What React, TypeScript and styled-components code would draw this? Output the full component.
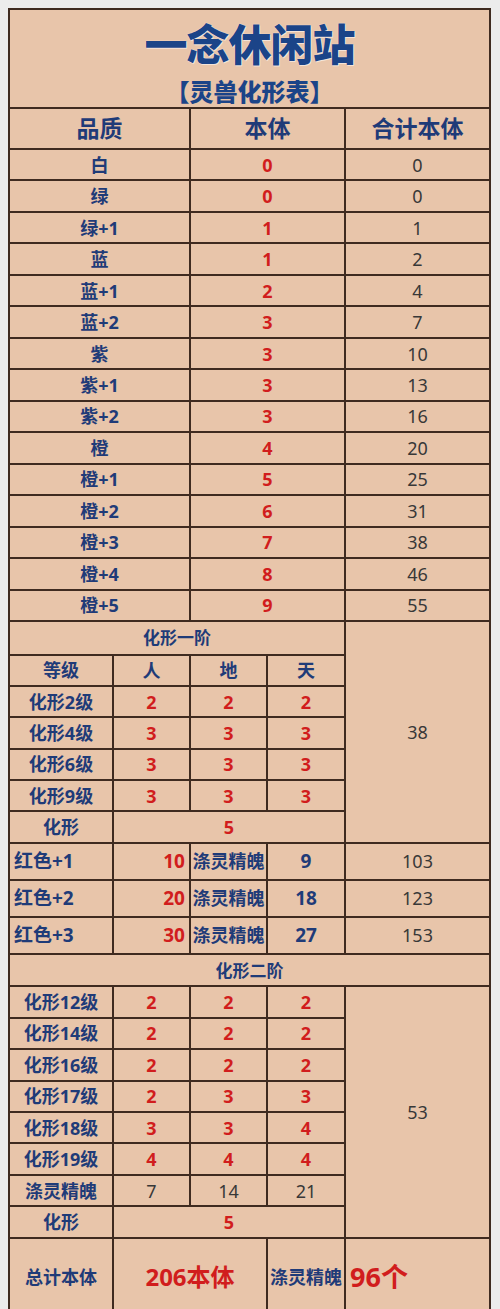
import React from "react";
import styled, { createGlobalStyle, css } from "styled-components";

const Global = createGlobalStyle`
  html, body { margin: 0; padding: 0; background: #ececec; }
  body { padding: 8px; font-family: "Noto Sans", "Noto Sans CJK SC", sans-serif; }
`;

const NAVY = "#1f3b78";
const RED = "#d11d1d";
const PLAIN = "#383838";
const LINE = "#3f2b20";
const FILL = "#e8c5aa";

const Sheet = styled.div`
  display: grid;
  width: 483px;
  box-sizing: border-box;
  grid-template-columns: 102px 75px 75px 76px 143px;
  grid-template-rows:
    97px 39px repeat(15, 29.47px) 31.5px repeat(6, 29.4px) repeat(3, 35px)
    30.4px repeat(8, 29.45px) 76px;
  gap: 2px;
  padding: 2px;
  background: ${LINE};
`;

type Tone = "navy" | "red" | "plain";

const toneColor = (t: Tone) => (t === "red" ? RED : t === "plain" ? PLAIN : NAVY);

const Cell = styled.div<{
  $span?: number;
  $rows?: number;
  $tone?: Tone;
  $size?: number;
  $align?: "left" | "center" | "right";
  $light?: boolean;
}>`
  background: ${FILL};
  display: flex;
  align-items: center;
  justify-content: ${(p) =>
    p.$align === "left" ? "flex-start" : p.$align === "right" ? "flex-end" : "center"};
  padding: 0 ${(p) => (p.$align === "right" ? "4px" : "0")} 0
    ${(p) => (p.$align === "left" ? "4px" : "0")};
  grid-column: span ${(p) => p.$span ?? 1};
  ${(p) =>
    p.$rows &&
    css`
      grid-row: span ${p.$rows};
    `}
  color: ${(p) => toneColor(p.$tone ?? "navy")};
  font-size: ${(p) => p.$size ?? 18}px;
  font-weight: ${(p) => (p.$light ? 400 : 700)};
  line-height: 1;
  white-space: nowrap;
  overflow: hidden;
`;

const TitleBlock = styled.div`
  grid-column: span 5;
  background: ${FILL};
  display: flex;
  flex-direction: column;
  align-items: center;
  padding-top: 9px;
  gap: 12px;
`;

const Title = styled.div`
  font-family: "Noto Sans CJK SC", sans-serif;
  font-size: 43px;
  font-weight: 900;
  line-height: 46px;
  color: #1b4488;
  letter-spacing: -1px;
  text-shadow: 0 0 1px #ffffff, 1px 1px 0 rgba(255, 255, 255, 0.5);
`;

const Subtitle = styled.div`
  font-family: "Noto Sans CJK SC", sans-serif;
  font-size: 24px;
  font-weight: 900;
  line-height: 28px;
  color: #1b4488;
  letter-spacing: 0px;
`;

const qualityRows: [string, number, number][] = [
  ["白", 0, 0],
  ["绿", 0, 0],
  ["绿+1", 1, 1],
  ["蓝", 1, 2],
  ["蓝+1", 2, 4],
  ["蓝+2", 3, 7],
  ["紫", 3, 10],
  ["紫+1", 3, 13],
  ["紫+2", 3, 16],
  ["橙", 4, 20],
  ["橙+1", 5, 25],
  ["橙+2", 6, 31],
  ["橙+3", 7, 38],
  ["橙+4", 8, 46],
  ["橙+5", 9, 55],
];

const stage1: [string, number, number, number][] = [
  ["化形2级", 2, 2, 2],
  ["化形4级", 3, 3, 3],
  ["化形6级", 3, 3, 3],
  ["化形9级", 3, 3, 3],
];

const redRows: [string, number, number, number][] = [
  ["红色+1", 10, 9, 103],
  ["红色+2", 20, 18, 123],
  ["红色+3", 30, 27, 153],
];

const stage2: [string, number, number, number][] = [
  ["化形12级", 2, 2, 2],
  ["化形14级", 2, 2, 2],
  ["化形16级", 2, 2, 2],
  ["化形17级", 2, 3, 3],
  ["化形18级", 3, 3, 4],
  ["化形19级", 4, 4, 4],
];

export default function App() {
  return (
    <>
      <Global />
      <Sheet>
        <TitleBlock>
          <Title>一念休闲站</Title>
          <Subtitle>【灵兽化形表】</Subtitle>
        </TitleBlock>

        <Cell $span={2} $size={23}>品质</Cell>
        <Cell $span={2} $size={23}>本体</Cell>
        <Cell $size={23}>合计本体</Cell>

        {qualityRows.map(([q, b, t]) => (
          <React.Fragment key={q}>
            <Cell $span={2}>{q}</Cell>
            <Cell $span={2} $tone="red">{b}</Cell>
            <Cell $tone="plain" $light>{t}</Cell>
          </React.Fragment>
        ))}

        <Cell $span={4} $size={17}>化形一阶</Cell>
        <Cell $rows={7} $tone="plain" $light>38</Cell>
        <Cell>等级</Cell>
        <Cell>人</Cell>
        <Cell>地</Cell>
        <Cell>天</Cell>
        {stage1.map(([n, a, b, c]) => (
          <React.Fragment key={n}>
            <Cell>{n}</Cell>
            <Cell $tone="red">{a}</Cell>
            <Cell $tone="red">{b}</Cell>
            <Cell $tone="red">{c}</Cell>
          </React.Fragment>
        ))}
        <Cell>化形</Cell>
        <Cell $span={3} $tone="red">5</Cell>

        {redRows.map(([n, a, b, t]) => (
          <React.Fragment key={n}>
            <Cell $align="left" $size={19}>{n}</Cell>
            <Cell $align="right" $tone="red" $size={19}>{a}</Cell>
            <Cell>涤灵精魄</Cell>
            <Cell $size={19}>{b}</Cell>
            <Cell $tone="plain" $light>{t}</Cell>
          </React.Fragment>
        ))}

        <Cell $span={5} $size={17}>化形二阶</Cell>
        {stage2.map(([n, a, b, c], i) => (
          <React.Fragment key={n}>
            <Cell>{n}</Cell>
            <Cell $tone="red">{a}</Cell>
            <Cell $tone="red">{b}</Cell>
            <Cell $tone="red">{c}</Cell>
            {i === 0 && (
              <Cell $rows={8} $tone="plain" $light>53</Cell>
            )}
          </React.Fragment>
        ))}
        <Cell>涤灵精魄</Cell>
        <Cell $tone="plain" $light>7</Cell>
        <Cell $tone="plain" $light>14</Cell>
        <Cell $tone="plain" $light>21</Cell>
        <Cell>化形</Cell>
        <Cell $span={3} $tone="red">5</Cell>

        <Cell>总计本体</Cell>
        <Cell $span={2} $tone="red" $size={24}>206本体</Cell>
        <Cell>涤灵精魄</Cell>
        <Cell $align="left" $tone="red" $size={27}>96个</Cell>
      </Sheet>
    </>
  );
}
